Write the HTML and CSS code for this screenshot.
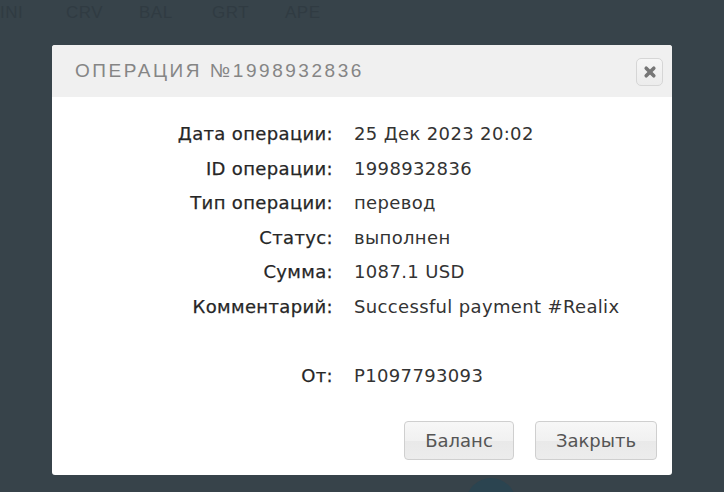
FILE: index.html
```html
<!DOCTYPE html>
<html lang="ru">
<head>
<meta charset="utf-8">
<link rel="stylesheet" href="styles.css">
</head>
<body>
<div class="page">
  <nav class="tickers">
    <span class="tick t1">INI</span>
    <span class="tick">CRV</span>
    <span class="tick">BAL</span>
    <span class="tick">GRT</span>
    <span class="tick">APE</span>
  </nav>
  <div class="blob"></div>
</div>
<div class="dialog">
  <div class="dlg-head">
    <h2 class="dlg-title">ОПЕРАЦИЯ №1998932836</h2>
    <button class="dlg-close" aria-label="close">
      <svg width="14" height="14" viewBox="0 0 14 14"><path d="M3.2 3.2 L10.8 10.8 M10.8 3.2 L3.2 10.8" stroke="#777" stroke-width="3.6" stroke-linecap="round"/></svg>
    </button>
  </div>
  <div class="dlg-body">
    <div class="lbl">Дата операции:</div><div class="val">25 Дек 2023 20:02</div>
    <div class="lbl">ID операции:</div><div class="val">1998932836</div>
    <div class="lbl">Тип операции:</div><div class="val">перевод</div>
    <div class="lbl">Статус:</div><div class="val">выполнен</div>
    <div class="lbl">Сумма:</div><div class="val">1087.1 USD</div>
    <div class="lbl">Комментарий:</div><div class="val">Successful payment #Realix</div>
    <div class="lbl empty"></div><div class="val empty"></div>
    <div class="lbl">От:</div><div class="val">P1097793093</div>
  </div>
  <div class="dlg-foot">
    <button class="btn btn-bal">Баланс</button>
    <button class="btn btn-close">Закрыть</button>
  </div>
</div>
</body>
</html>
```
FILE: styles.css
```css
html, body {
  margin: 0;
  padding: 0;
}
body {
  background: #37434a;
  width: 724px;
  height: 492px;
  overflow: hidden;
  position: relative;
  font-family: "DejaVu Sans", sans-serif;
}
.page {
  height: 492px;
  overflow: hidden;
}
.tickers {
  display: flex;
  padding-top: 3px;
  font-family: "Liberation Sans", sans-serif;
  font-size: 17px;
  letter-spacing: 0.5px;
  color: #303b42;
}
.tick {
  width: 73px;
  flex: none;
}
.tick.t1 {
  width: 66px;
}
.blob {
  width: 50px;
  height: 50px;
  border-radius: 50%;
  background: #2b4450;
  margin: 455px 0 0 466px;
}
.dialog {
  position: absolute;
  left: 52px;
  top: 45px;
  width: 620px;
  height: 430px;
  background: #fff;
  border-radius: 3px;
  overflow: hidden;
  display: flex;
  flex-direction: column;
}
.dlg-head {
  height: 52px;
  background: #f0f0f0;
  display: flex;
  align-items: center;
  justify-content: space-between;
  padding: 0 9px 0 23px;
}
.dlg-title {
  margin: 0;
  font-family: "Liberation Sans", sans-serif;
  font-weight: normal;
  font-size: 19px;
  letter-spacing: 2.55px;
  color: #858585;
}
.dlg-close {
  width: 27px;
  height: 28px;
  border: 1px solid #d6d6d6;
  border-radius: 5px;
  background: linear-gradient(#f6f6f6, #ececec);
  display: flex;
  align-items: center;
  justify-content: center;
  padding: 0;
  margin-top: 1px;
}
.dlg-body {
  flex: 1;
  display: grid;
  grid-template-columns: 281px 1fr;
  column-gap: 21px;
  row-gap: 14.5px;
  align-content: start;
  padding-top: 27px;
  font-size: 18px;
  letter-spacing: 0.35px;
  line-height: 20px;
  color: #333;
}
.lbl {
  text-align: right;
  color: #262626;
  -webkit-text-stroke: 0.25px #262626;
}
.empty {
  height: 20px;
}
.dlg-foot {
  display: flex;
  justify-content: flex-end;
  gap: 21px;
  padding: 0 15px 15px 0;
}
.btn {
  height: 39px;
  padding: 0;
  border: 1px solid #cfcfcf;
  border-radius: 4px;
  background: linear-gradient(#f7f7f7 0%, #f1f1f1 50%, #e9e9e9 51%, #ececec 100%);
  font-family: "DejaVu Sans", sans-serif;
  font-size: 18px;
  color: #555;
}
.btn-bal {
  width: 110px;
}
.btn-close {
  width: 122px;
}
```
